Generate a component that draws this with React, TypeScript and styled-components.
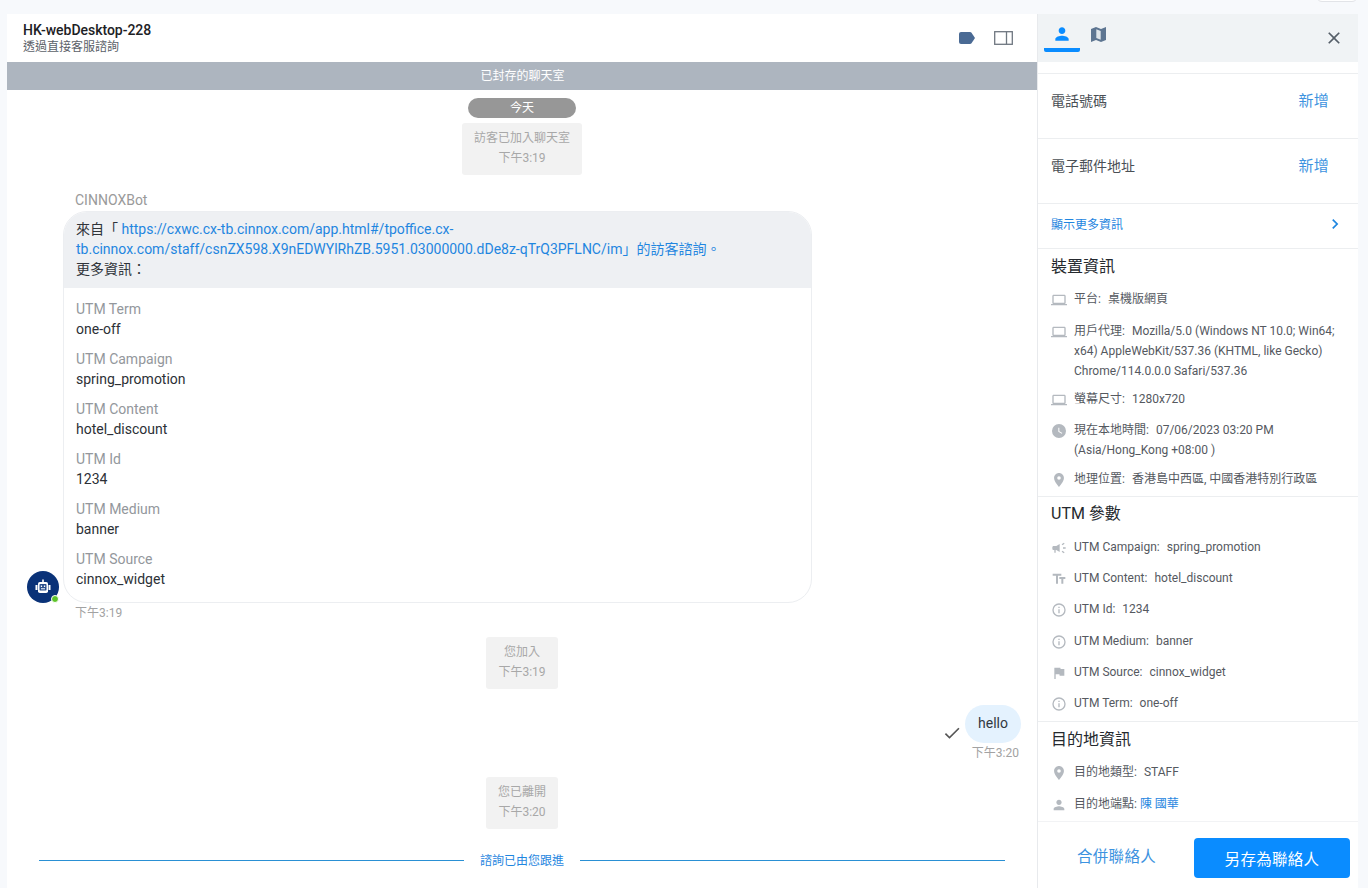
import React from "react";
import styled, { createGlobalStyle } from "styled-components";

const Global = createGlobalStyle`
  html, body { margin: 0; padding: 0; height: 100%; overflow: hidden; background: #f7f9fc; }
  body { font-family: Roboto, "Noto Sans CJK TC", sans-serif; color: #3c4248; }
  * { box-sizing: border-box; }
`;

const Page = styled.div`
  width: 1368px; height: 888px; display: flex; flex-direction: column; overflow: hidden;
`;
const TopStrip = styled.div`
  height: 14px; flex: none; display: flex; justify-content: flex-end; padding-right: 10px; overflow: hidden;
`;
const CutButton = styled.div`
  width: 42px; height: 22px; margin-top: -20px; background: #fff; border: 1px solid #e2e4e8; border-radius: 6px;
`;
const Workspace = styled.div`
  flex: 1; display: flex; padding: 0 10px 0 7px; min-height: 0;
`;
const Chat = styled.main`
  width: 1030px; background: #fff; display: flex; flex-direction: column; align-items: stretch;
`;
const ChatHeader = styled.header`
  height: 48px; flex: none; display: flex; align-items: center; justify-content: space-between; padding: 0 24px 0 16px;
`;
const Titles = styled.div`display: flex; flex-direction: column; margin-top: -1px;`;
const Title = styled.div`font-size: 14px; line-height: 18px; font-weight: 500; color: #1d2125; letter-spacing: -0.03px;`;
const Subtitle = styled.div`font-size: 12px; line-height: 16px; color: #5b6168;`;
const HeaderIcons = styled.div`display: flex; align-items: center; gap: 19px;`;
const Banner = styled.div`
  height: 28px; flex: none; background: #adb5bf; color: #fff; font-size: 12px; display: flex; align-items: center; justify-content: center; padding: 0 0 3px 1px;
`;
const Messages = styled.div`
  flex: 1; display: flex; flex-direction: column; min-height: 0;
`;
const DatePill = styled.div`
  align-self: center; width: 108px; height: 20px; margin-top: 8px; border-radius: 10px; background: #979797; color: #fff; font-size: 12px; line-height: 20px; text-align: center;
`;
const SystemCard = styled.div<{ $top: number; $w: number }>`
  align-self: center; width: ${(p) => p.$w}px; height: 52px; margin-top: ${(p) => p.$top}px; background: #f2f2f2; border-radius: 3px; color: #a8a8a8; font-size: 12px; line-height: 20px; text-align: center; padding-top: 5px;
`;
const Sender = styled.div`
  margin: 17px 0 0 68px; font-size: 14px; line-height: 17px; color: #9a9a9a; height: 19px;
`;
const BotRow = styled.div`
  display: flex; align-items: flex-end; padding-left: 20px; gap: 4px;
`;
const AvatarWrap = styled.div`
  position: relative; width: 32px; height: 32px; border-radius: 50%; background: #0a3278; display: flex; align-items: center; justify-content: center; flex: none;
`;
const OnlineDot = styled.span`
  position: absolute; right: 0; bottom: 0; width: 8px; height: 8px; border-radius: 50%; background: #5dc428; border: 1.5px solid #fff;
`;
const Bubble = styled.div`
  width: 749px; height: 392px; border: 1px solid #eceef1; border-radius: 24px; overflow: hidden;
`;
const BubbleHead = styled.div`
  background: #eef0f3; height: 76px; padding: 7px 12px; font-size: 14px; line-height: 20px; color: #30343a;
`;
const A = styled.a`color: #1f86e0; text-decoration: none;`;
const Fields = styled.div`padding: 11px 12px 0;`;
const Field = styled.div`height: 50px; font-size: 14px; line-height: 20px;`;
const FieldLabel = styled.div`color: #93979c;`;
const FieldValue = styled.div`color: #2c3036;`;
const BotTime = styled.div`
  margin: 2px 0 0 68px; font-size: 12px; line-height: 17px; color: #a2a2a2;
`;
const OwnWrap = styled.div`
  display: flex; flex-direction: column; align-items: flex-end; padding-right: 16px; margin-top: 16px;
`;
const OwnRow = styled.div`display: flex; align-items: flex-end; gap: 3px;`;
const OwnBubble = styled.div`
  width: 56px; height: 38px; border-radius: 19px; background: #e4f2fe; color: #33383e; font-size: 14px; line-height: 36px; text-align: center;
`;
const OwnTime = styled.div`font-size: 12px; line-height: 16px; color: #a2a2a2; margin: 2px 2px 0 0;`;
const FollowUp = styled.div`
  display: flex; align-items: center; margin: 22px 32px 0; gap: 16px; color: #1f86e0; font-size: 12px; line-height: 20px;
`;
const FollowLine = styled.div`
  height: 1px; margin-bottom: 1px; background: #2a90d4; flex: 1 1 0;
`;

const Panel = styled.aside`
  width: 321px; background: #fff; display: flex; flex-direction: column; border-left: 1px solid #e8eaed; min-height: 0;
`;
const Tabs = styled.div`
  height: 48px; flex: none; background: #f0f3f5; display: flex; justify-content: space-between; padding: 0 14px 0 6px;
`;
const TabGroup = styled.div`display: flex;`;
const Tab = styled.div<{ $active?: boolean }>`
  width: 36px; height: 38px; display: flex; align-items: flex-start; justify-content: center; padding-top: 10px; border-bottom: ${(p) => (p.$active ? "4px solid #0a8cff" : "none")}; border-radius: 0 0 2px 2px;
`;
const MapTabIcon = styled.svg`margin-top: 3px;`;
const CloseBtn = styled.div`display: flex; align-items: center; height: 48px;`;
const Scroll = styled.div`flex: 1; min-height: 0; overflow: hidden; display: flex; flex-direction: column;`;
const Spacer = styled.div`height: 12px; flex: none; border-bottom: 1px solid #eceef0;`;
const ContactRow = styled.div`
  height: 65px; flex: none; border-bottom: 1px solid #eceef0; display: flex; justify-content: space-between; padding: 16px 29px 0 13px; font-size: 14px; line-height: 22px; color: #4a4f55;
`;
const AddLink = styled.span`color: #3d93e0; font-size: 15px; letter-spacing: 0.3px;`;
const MoreRow = styled.div`
  height: 45px; flex: none; border-bottom: 1px solid #eceef0; display: flex; justify-content: space-between; align-items: center; padding: 0 13px 5px 13px; color: #1f86e0; font-size: 12px;
`;
const Section = styled.section<{ $bordered?: boolean; $top: number }>`
  flex: none; padding: ${(p) => p.$top}px 13px 0 13px; border-bottom: ${(p) => (p.$bordered ? "1px solid #eceef0" : "none")};
`;
const SectionTitle = styled.h3<{ $gap?: number }>`
  margin: 0 0 ${(p) => p.$gap ?? 10}px; font-weight: 400; font-size: 16px; line-height: 24px; color: #25292e;
`;
const InfoRow = styled.div<{ $h: number }>`
  display: flex; min-height: ${(p) => p.$h}px; font-size: 12px; line-height: 20px; color: #55595f;
`;
const InfoIcon = styled.div`
  width: 23px; flex: none; height: 20px; display: flex; align-items: center; padding-top: 2px;
`;
const InfoText = styled.div`flex: 1;`;
const Key = styled.span`margin-right: 4px;`;
const Footer = styled.div`
  height: 67px; flex: none; border-top: 1px solid #f2f3f5; display: flex; align-items: flex-start; justify-content: space-between; padding: 16px 8px 0 39px;
`;
const Secondary = styled.div`color: #3d93e0; font-size: 15.5px; letter-spacing: 0.3px; line-height: 38px;`;
const Primary = styled.div`
  width: 156px; height: 40px; background: #0a8cff; border-radius: 4px; color: #fff; font-size: 15.5px; letter-spacing: 0.3px; display: flex; align-items: center; justify-content: center;
`;

const G = "#b4b9bf";
const Laptop = () => (
  <svg width="16" height="16" viewBox="0 0 24 24" fill={G}><path d="M20 18c1.1 0 2-.9 2-2V6c0-1.1-.9-2-2-2H4c-1.1 0-2 .9-2 2v10c0 1.1.9 2 2 2H0v2h24v-2h-4zM4 6h16v10H4V6z" /></svg>
);
const Clock = () => (
  <svg width="16" height="16" viewBox="0 0 24 24" fill={G}><path d="M12 1.500a10.500 10.500 0 1 0 0 21 10.500 10.500 0 0 0 0-21zm4.200 14.700L11 13V7h1.500v5.200l4.500 2.700-.8 1.300z" /></svg>
);
const Pin = () => (
  <svg width="16" height="16" viewBox="0 0 24 24" fill={G}><path d="M12 1.500C7.900 1.500 4.600 4.800 4.600 9c0 5.500 7.400 13.500 7.400 13.500S19.400 14.500 19.400 9c0-4.200-3.300-7.500-7.400-7.500zm0 10.200a2.700 2.700 0 0 1 0-5.400 2.700 2.700 0 0 1 0 5.400z" /></svg>
);
const Person = ({ c = G, s = 16 }: { c?: string; s?: number }) => (
  <svg width={s} height={s} viewBox="0 0 24 24" fill={c}><path d="M12 12c2.210 0 4-1.790 4-4s-1.790-4-4-4-4 1.790-4 4 1.790 4 4 4zm0 2c-2.670 0-8 1.340-8 4v2h16v-2c0-2.660-5.330-4-8-4z" /></svg>
);
const Info = () => (
  <svg width="16" height="16" viewBox="0 0 24 24" fill={G}><path d="M11 7h2v2h-2zm0 4h2v6h-2zm1-9a10 10 0 1 0 0 20 10 10 0 0 0 0-20zm0 18a8 8 0 1 1 0-16 8 8 0 0 1 0 16z" /></svg>
);
const Campaign = () => (
  <svg width="16" height="16" viewBox="0 0 24 24" fill={G}><path d="M18 11v2h4v-2h-4zm-2 6.610c.96.71 2.210 1.650 3.200 2.390.4-.53.8-1.070 1.200-1.600-.99-.74-2.240-1.680-3.200-2.400-.4.54-.8 1.080-1.200 1.610zM20.400 5.600c-.4-.53-.8-1.070-1.200-1.600-.99.74-2.240 1.680-3.200 2.400.4.53.8 1.070 1.200 1.600.96-.72 2.210-1.650 3.200-2.400zM4 9c-1.100 0-2 .9-2 2v2c0 1.100.9 2 2 2h1v4h2v-4h1l5 3V6L8 9H4z" /></svg>
);
const TextFields = () => (
  <svg width="16" height="16" viewBox="0 0 24 24" fill={G}><path d="M2.500 4v3h5v12h3V7h5V4h-13zm19 5h-9v3h3v7h3v-7h3V9z" /></svg>
);
const Flag = () => (
  <svg width="16" height="16" viewBox="0 0 24 24" fill={G}><path d="M14.400 6 14 4H5v17h2v-7h5.600l.4 2h7V6z" /></svg>
);

const fields = [
  ["UTM Term", "one-off"],
  ["UTM Campaign", "spring_promotion"],
  ["UTM Content", "hotel_discount"],
  ["UTM Id", "1234"],
  ["UTM Medium", "banner"],
  ["UTM Source", "cinnox_widget"],
];

const utm: [React.ReactNode, string, string, number][] = [
  [<Campaign />, "UTM Campaign:", "spring_promotion", 31],
  [<TextFields />, "UTM Content:", "hotel_discount", 31],
  [<Info />, "UTM Id:", "1234", 32],
  [<Info />, "UTM Medium:", "banner", 31],
  [<Flag />, "UTM Source:", "cinnox_widget", 31],
  [<Info />, "UTM Term:", "one-off", 28],
];

export default function App() {
  return (
    <Page>
      <Global />
      <TopStrip><CutButton /></TopStrip>
      <Workspace>
        <Chat>
          <ChatHeader>
            <Titles>
              <Title>HK-webDesktop-228</Title>
              <Subtitle>透過直接客服諮詢</Subtitle>
            </Titles>
            <HeaderIcons>
              <svg width="16" height="12" viewBox="0 0 16 12"><path d="M2 0h9c.6 0 1.100.3 1.500.7L16 6l-3.500 5.300c-.4.4-.9.7-1.500.7H2a2 2 0 0 1-2-2V2a2 2 0 0 1 2-2z" fill="#4a6a94" /></svg>
              <svg width="19" height="14" viewBox="0 0 19 14" fill="none" stroke="#6f7780" strokeWidth="1.3"><rect x=".7" y=".7" width="17.6" height="12.6" /><path d="M12.500.7v12.600" /></svg>
            </HeaderIcons>
          </ChatHeader>
          <Banner>已封存的聊天室</Banner>
          <Messages>
            <DatePill>今天</DatePill>
            <SystemCard $top={5} $w={120}>
              <div>訪客已加入聊天室</div>
              <div>下午3:19</div>
            </SystemCard>
            <Sender>CINNOXBot</Sender>
            <BotRow>
              <AvatarWrap>
                <svg width="20" height="20" viewBox="0 0 20 20">
                  <rect x="9.200" y="2.500" width="1.600" height="3" fill="#fff" />
                  <rect x="2.500" y="8" width="2" height="5" fill="#fff" />
                  <rect x="15.500" y="8" width="2" height="5" fill="#fff" />
                  <rect x="5" y="5" width="10" height="11" rx="1.800" fill="#fff" />
                  <rect x="6.500" y="7" width="7" height="6.500" rx=".8" fill="#2a4f8c" />
                  <rect x="7.800" y="8.500" width="1.300" height="1.500" fill="#fff" />
                  <rect x="10.900" y="8.500" width="1.300" height="1.500" fill="#fff" />
                  <rect x="8" y="11.300" width="4" height="1" fill="#fff" />
                </svg>
                <OnlineDot />
              </AvatarWrap>
              <Bubble>
                <BubbleHead>
                  來自「 <A>https://cxwc.cx-tb.cinnox.com/app.html#/tpoffice.cx-tb.cinnox.com/staff/csnZX598.X9nEDWYlRhZB.5951.03000000.dDe8z-qTrQ3PFLNC/im」的訪客諮詢。</A>
                  <br />更多資訊：
                </BubbleHead>
                <Fields>
                  {fields.map(([l, v]) => (
                    <Field key={l}>
                      <FieldLabel>{l}</FieldLabel>
                      <FieldValue>{v}</FieldValue>
                    </Field>
                  ))}
                </Fields>
              </Bubble>
            </BotRow>
            <BotTime>下午3:19</BotTime>
            <SystemCard $top={15} $w={72}>
              <div>您加入</div>
              <div>下午3:19</div>
            </SystemCard>
            <OwnWrap>
              <OwnRow>
                <svg width="20" height="20" viewBox="0 0 24 24" fill="#555"><path d="M9 16.200 4.800 12l-1.400 1.400L9 19 21 7l-1.400-1.400z" /></svg>
                <OwnBubble>hello</OwnBubble>
              </OwnRow>
              <OwnTime>下午3:20</OwnTime>
            </OwnWrap>
            <SystemCard $top={16} $w={72}>
              <div>您已離開</div>
              <div>下午3:20</div>
            </SystemCard>
            <FollowUp>
              <FollowLine />
              <span>諮詢已由您跟進</span>
              <FollowLine />
            </FollowUp>
          </Messages>
        </Chat>
        <Panel>
          <Tabs>
            <TabGroup>
              <Tab $active><Person c="#0a8cff" s={20} /></Tab>
              <Tab>
                <MapTabIcon width="15" height="15" viewBox="0 0 15 15">
                  <path d="M0 2 5 0l5 2 5-2v13l-5 2-5-2-5 2z" fill="#5d7591" />
                  <path d="M5.300 2.300 9.700 4v8.700L5.300 11z" fill="#dfe5ea" />
                </MapTabIcon>
              </Tab>
            </TabGroup>
            <CloseBtn>
              <svg width="20" height="20" viewBox="0 0 24 24" fill="#555e68"><path d="M19 6.410 17.590 5 12 10.590 6.410 5 5 6.410 10.590 12 5 17.590 6.410 19 12 13.410 17.590 19 19 17.590 13.410 12z" /></svg>
            </CloseBtn>
          </Tabs>
          <Scroll>
            <Spacer />
            <ContactRow><span>電話號碼</span><AddLink>新增</AddLink></ContactRow>
            <ContactRow><span>電子郵件地址</span><AddLink>新增</AddLink></ContactRow>
            <MoreRow>
              <span>顯示更多資訊</span>
              <svg width="20" height="20" viewBox="0 0 24 24" fill="#1f86e0"><path d="M10 6 8.600 7.400 13.200 12l-4.600 4.600L10 18l6-6z" /></svg>
            </MoreRow>
            <Section $bordered $top={6}>
              <SectionTitle>裝置資訊</SectionTitle>
              <InfoRow $h={32}><InfoIcon><Laptop /></InfoIcon><InfoText><Key>平台:</Key> 桌機版網頁</InfoText></InfoRow>
              <InfoRow $h={68}><InfoIcon><Laptop /></InfoIcon><InfoText><Key>用戶代理:</Key> Mozilla/5.0 (Windows NT 10.0; Win64; x64) AppleWebKit/537.36 (KHTML, like Gecko) Chrome/114.0.0.0 Safari/537.36</InfoText></InfoRow>
              <InfoRow $h={31}><InfoIcon><Laptop /></InfoIcon><InfoText><Key>螢幕尺寸:</Key> 1280x720</InfoText></InfoRow>
              <InfoRow $h={49}><InfoIcon><Clock /></InfoIcon><InfoText><Key>現在本地時間:</Key> 07/06/2023 03:20 PM (Asia/Hong_Kong +08:00 )</InfoText></InfoRow>
              <InfoRow $h={27}><InfoIcon><Pin /></InfoIcon><InfoText><Key>地理位置:</Key> 香港島中西區, 中國香港特別行政區</InfoText></InfoRow>
            </Section>
            <Section $bordered $top={5}>
              <SectionTitle $gap={11}>UTM 參數</SectionTitle>
              {utm.map(([icon, k, v, h]) => (
                <InfoRow key={k} $h={h}><InfoIcon>{icon}</InfoIcon><InfoText><Key>{k}</Key> {v}</InfoText></InfoRow>
              ))}
            </Section>
            <Section $top={6}>
              <SectionTitle>目的地資訊</SectionTitle>
              <InfoRow $h={32}><InfoIcon><Pin /></InfoIcon><InfoText><Key>目的地類型:</Key> STAFF</InfoText></InfoRow>
              <InfoRow $h={20}><InfoIcon><Person /></InfoIcon><InfoText>目的地端點: <A>陳 國華</A></InfoText></InfoRow>
            </Section>
          </Scroll>
          <Footer>
            <Secondary>合併聯絡人</Secondary>
            <Primary>另存為聯絡人</Primary>
          </Footer>
        </Panel>
      </Workspace>
    </Page>
  );
}
